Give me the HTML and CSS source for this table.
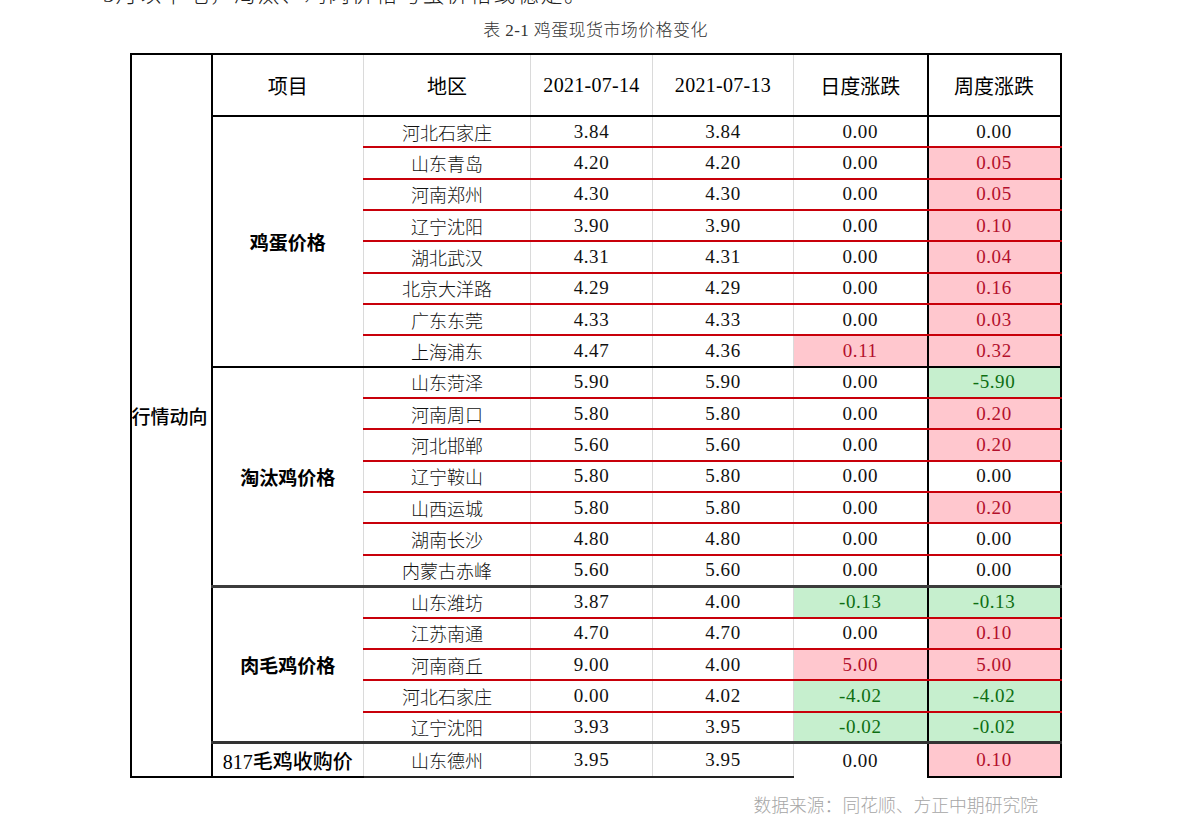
FILE: index.html
```html
<!DOCTYPE html>
<html lang="zh-CN">
<head>
<meta charset="utf-8">
<title>表 2-1 鸡蛋现货市场价格变化</title>
<link rel="stylesheet" href="styles.css">
</head>
<body>
<div class="page">
  <p class="intro">5月以下毛，淘汰、鸡肉价格与蛋价格或稳定。</p>
  <p class="caption">表 2-1 鸡蛋现货市场价格变化</p>
  <table class="grid">
    <colgroup>
      <col class="c0"><col class="c1"><col class="c2"><col class="c3"><col class="c4"><col class="c5"><col class="c6">
    </colgroup>
    <tbody>
      <tr class="head">
        <td class="trend" rowspan="22">行情动向</td>
        <th class="item">项目</th>
        <th>地区</th>
        <th class="date">2021-07-14</th>
        <th class="date">2021-07-13</th>
        <th>日度涨跌</th>
        <th class="wk">周度涨跌</th>
      </tr>
      <tr class="r">
        <td class="group g1" rowspan="8">鸡蛋价格</td>
        <td class="reg">河北石家庄</td><td class="num">3.84</td><td class="num">3.84</td><td class="num">0.00</td><td class="num wk">0.00</td>
      </tr>
      <tr class="r"><td class="reg">山东青岛</td><td class="num">4.20</td><td class="num">4.20</td><td class="num">0.00</td><td class="num wk up">0.05</td></tr>
      <tr class="r"><td class="reg">河南郑州</td><td class="num">4.30</td><td class="num">4.30</td><td class="num">0.00</td><td class="num wk up">0.05</td></tr>
      <tr class="r"><td class="reg">辽宁沈阳</td><td class="num">3.90</td><td class="num">3.90</td><td class="num">0.00</td><td class="num wk up">0.10</td></tr>
      <tr class="r"><td class="reg">湖北武汉</td><td class="num">4.31</td><td class="num">4.31</td><td class="num">0.00</td><td class="num wk up">0.04</td></tr>
      <tr class="r"><td class="reg">北京大洋路</td><td class="num">4.29</td><td class="num">4.29</td><td class="num">0.00</td><td class="num wk up">0.16</td></tr>
      <tr class="r"><td class="reg">广东东莞</td><td class="num">4.33</td><td class="num">4.33</td><td class="num">0.00</td><td class="num wk up">0.03</td></tr>
      <tr class="end1"><td class="reg">上海浦东</td><td class="num">4.47</td><td class="num">4.36</td><td class="num up">0.11</td><td class="num wk up">0.32</td></tr>

      <tr class="r">
        <td class="group g2" rowspan="7">淘汰鸡价格</td>
        <td class="reg">山东菏泽</td><td class="num">5.90</td><td class="num">5.90</td><td class="num">0.00</td><td class="num wk down">-5.90</td>
      </tr>
      <tr class="r"><td class="reg">河南周口</td><td class="num">5.80</td><td class="num">5.80</td><td class="num">0.00</td><td class="num wk up">0.20</td></tr>
      <tr class="r"><td class="reg">河北邯郸</td><td class="num">5.60</td><td class="num">5.60</td><td class="num">0.00</td><td class="num wk up">0.20</td></tr>
      <tr class="r"><td class="reg">辽宁鞍山</td><td class="num">5.80</td><td class="num">5.80</td><td class="num">0.00</td><td class="num wk">0.00</td></tr>
      <tr class="r"><td class="reg">山西运城</td><td class="num">5.80</td><td class="num">5.80</td><td class="num">0.00</td><td class="num wk up">0.20</td></tr>
      <tr class="r"><td class="reg">湖南长沙</td><td class="num">4.80</td><td class="num">4.80</td><td class="num">0.00</td><td class="num wk">0.00</td></tr>
      <tr class="end2"><td class="reg">内蒙古赤峰</td><td class="num">5.60</td><td class="num">5.60</td><td class="num">0.00</td><td class="num wk">0.00</td></tr>

      <tr class="r">
        <td class="group g3" rowspan="5">肉毛鸡价格</td>
        <td class="reg">山东潍坊</td><td class="num">3.87</td><td class="num">4.00</td><td class="num down">-0.13</td><td class="num wk down">-0.13</td>
      </tr>
      <tr class="r"><td class="reg">江苏南通</td><td class="num">4.70</td><td class="num">4.70</td><td class="num">0.00</td><td class="num wk up">0.10</td></tr>
      <tr class="r"><td class="reg">河南商丘</td><td class="num">9.00</td><td class="num">4.00</td><td class="num up">5.00</td><td class="num wk up">5.00</td></tr>
      <tr class="r"><td class="reg">河北石家庄</td><td class="num">0.00</td><td class="num">4.02</td><td class="num down">-4.02</td><td class="num wk down">-4.02</td></tr>
      <tr class="end3"><td class="reg">辽宁沈阳</td><td class="num">3.93</td><td class="num">3.95</td><td class="num down">-0.02</td><td class="num wk down">-0.02</td></tr>

      <tr class="last">
        <td class="group g4">817毛鸡收购价</td>
        <td class="reg">山东德州</td><td class="num">3.95</td><td class="num">3.95</td><td class="num open">0.00</td><td class="num wk up">0.10</td>
      </tr>
    </tbody>
  </table>
  <p class="source">数据来源：同花顺、方正中期研究院</p>
</div>
</body>
</html>
```

FILE: styles.css
```css
html, body {
  margin: 0;
  padding: 0;
  background: #ffffff;
}

.page {
  width: 1191px;
  height: 833px;
  overflow: hidden;
  font-family: "Liberation Serif", "Noto Sans CJK SC", serif;
  color: #000;
}

.intro {
  margin: -17px 0 0 0;
  padding-left: 103px;
  font-family: "Liberation Serif", "Noto Sans CJK SC", serif;
  font-weight: 300;
  font-size: 22px;
  line-height: 24px;
  letter-spacing: 1.6px;
  color: #222;
}

.caption {
  margin: 13px 0 0 0;
  text-align: center;
  font-family: "Liberation Serif", "Noto Sans CJK SC", serif;
  font-weight: 300;
  font-size: 17px;
  line-height: 21px;
  letter-spacing: 0.4px;
  color: #333;
}

.grid {
  border-collapse: collapse;
  table-layout: fixed;
  width: 930px;
  margin: 12px auto 0 auto;
}

.c0 { width: 81px; }
.c1 { width: 152px; }
.c2 { width: 167px; }
.c3 { width: 122px; }
.c4 { width: 141px; }
.c5 { width: 134px; }
.c6 { width: 133px; }

.grid th,
.grid td {
  padding: 0;
  text-align: center;
  vertical-align: middle;
  border-left: 1px solid #dadada;
  border-right: 1px solid #dadada;
  border-top: none;
  border-bottom: none;
  white-space: nowrap;
}

.head {
  height: 62px;
}

.grid th {
  font-family: "Noto Sans CJK SC", sans-serif;
  font-weight: 400;
  font-size: 20px;
  border-top: 2px solid #000;
  border-bottom: 2px solid #000;
}

.grid th.date {
  font-family: "Liberation Serif", serif;
  font-size: 20px;
  letter-spacing: 0.3px;
}

.grid th.item {
  border-left: 2px solid #000;
}

.grid .wk {
  border-left: 2px solid #000;
  border-right: 2px solid #000;
}

.grid td.trend {
  border: 2px solid #000;
  font-family: "Noto Sans CJK SC", sans-serif;
  font-size: 19px;
  font-weight: 500;
  text-align: left;
}

.grid td.group {
  border-left: 2px solid #000;
  font-family: "Noto Sans CJK SC", sans-serif;
  font-weight: 700;
  font-size: 19px;
}

.grid td.g1 { border-bottom: 2px solid #000; }
.grid td.g2 { border-bottom: 3px solid #3c3c3c; }
.grid td.g3 { border-bottom: 3px solid #333; }
.grid td.g4 {
  border-bottom: 2px solid #000;
  font-family: "Liberation Serif", "Noto Sans CJK SC", serif;
  font-weight: 500;
  font-size: 20px;
}

.r, .end1, .end2, .end3 {
  height: 31.35px;
}

.last {
  height: 34px;
}

.grid td.reg {
  font-family: "Noto Sans CJK SC", sans-serif;
  font-weight: 300;
  font-size: 18px;
  color: #111;
  line-height: 22px;
}

.grid td.num {
  font-family: "Liberation Serif", serif;
  font-size: 19px;
  letter-spacing: 0.6px;
  color: #111;
}

.r td {
  border-bottom: 2px solid #c8000a;
}

.end1 td { border-bottom: 2px solid #000; }
.end2 td { border-bottom: 3px solid #3c3c3c; }
.end3 td { border-bottom: 3px solid #333; }

.last td { border-bottom: 2px solid #222; }
.last td.open { border-bottom: none; }
.last td.wk { border-bottom: 2px solid #000; }

.grid td.up {
  background: #ffc7ce;
  color: #b3102c;
}

.grid td.down {
  background: #c6efce;
  color: #0d6e12;
}

.source {
  margin: 17px 153px 0 0;
  text-align: right;
  font-family: "Liberation Serif", "Noto Sans CJK SC", serif;
  font-weight: 300;
  font-size: 17.8px;
  line-height: 22px;
  color: #a6a6a6;
}
```
